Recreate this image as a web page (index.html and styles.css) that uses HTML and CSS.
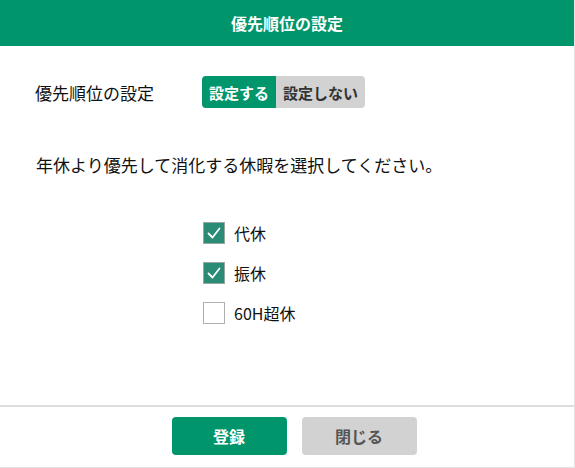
FILE: index.html
```html
<!DOCTYPE html>
<html lang="ja">
<head>
  <meta charset="UTF-8">
  <title>優先順位の設定</title>
  <link rel="stylesheet" href="styles.css">
</head>
<body>

<div class="dialogo">
  <div class="cabecera">優先順位の設定</div>

  <div class="cuerpo">
    <div class="fila-ajuste">
      <span class="etiqueta">優先順位の設定</span>
      <div class="interruptor">
        <span class="opcion activa">設定する</span>
        <span class="opcion">設定しない</span>
      </div>
    </div>

    <p class="instruccion">年休より優先して消化する休暇を選択してください。</p>

    <div class="lista">
      <label class="item"><span class="caja marcada"><svg viewBox="0 0 20 20"><path d="M4.5 10.5 L8.5 14.5 L15.5 5.5" fill="none" stroke="#fff" stroke-width="1.8" stroke-linecap="round" stroke-linejoin="round"/></svg></span>代休</label>
      <label class="item"><span class="caja marcada"><svg viewBox="0 0 20 20"><path d="M4.5 10.5 L8.5 14.5 L15.5 5.5" fill="none" stroke="#fff" stroke-width="1.8" stroke-linecap="round" stroke-linejoin="round"/></svg></span>振休</label>
      <label class="item"><span class="caja"></span>60H超休</label>
    </div>
  </div>

  <div class="pie">
    <button class="btn btn-verde">登録</button>
    <button class="btn btn-gris">閉じる</button>
  </div>
</div>

</body>
</html>
```

FILE: styles.css
```css
body {
  margin: 0;
  background: #fff;
  font-family: "Noto Sans CJK JP", "Noto Sans", sans-serif;
  color: #111;
}

.dialogo {
  width: 574px;
  height: 467px;
  border-right: 1px solid #e4e4e4;
  border-bottom: 1px solid #e4e4e4;
  display: flex;
  flex-direction: column;
}

.cabecera {
  height: 46px;
  flex-shrink: 0;
  background-color: #00956a;
  color: #fff;
  font-size: 16px;
  font-weight: bold;
  display: flex;
  align-items: center;
  justify-content: center;
}

.cuerpo {
  flex: 1;
  padding-top: 30px;
}

.fila-ajuste {
  display: flex;
  align-items: center;
  padding-left: 35px;
}

.etiqueta {
  font-size: 17px;
  width: 167px;
}

.interruptor {
  display: flex;
}

.opcion {
  height: 32px;
  display: flex;
  align-items: center;
  padding: 0 7px;
  font-size: 15px;
  font-weight: bold;
  background-color: #d2d2d2;
  color: #333;
  border-radius: 0 4px 4px 0;
}

.opcion.activa {
  background-color: #00956a;
  color: #fff;
  border-radius: 4px 0 0 4px;
}

.instruccion {
  margin: 45px 0 0 36px;
  font-size: 17px;
  line-height: 24px;
}

.lista {
  margin: 45px 0 0 203px;
  display: flex;
  flex-direction: column;
  gap: 18px;
}

.item {
  display: flex;
  align-items: center;
  font-size: 16px;
  height: 22px;
}

.caja {
  width: 20px;
  height: 20px;
  border: 1px solid #b0b0b0;
  background: #fff;
  margin-right: 9px;
  display: flex;
}

.caja.marcada {
  background-color: #2b8c76;
  border-color: #9aa8a4;
}

.caja svg {
  width: 20px;
  height: 20px;
}

.pie {
  height: 62px;
  flex-shrink: 0;
  border-top: 2px solid #ddd;
  display: flex;
  justify-content: center;
  align-items: flex-start;
  gap: 15px;
  padding: 10px 0 0 14px;
  box-sizing: border-box;
}

.btn {
  width: 115px;
  height: 38px;
  border: none;
  border-radius: 4px;
  font-family: "Noto Sans CJK JP", sans-serif;
  font-size: 16px;
  font-weight: bold;
}

.btn-verde {
  background-color: #00956a;
  color: #fff;
}

.btn-gris {
  background-color: #d2d2d2;
  color: #555;
}
```
